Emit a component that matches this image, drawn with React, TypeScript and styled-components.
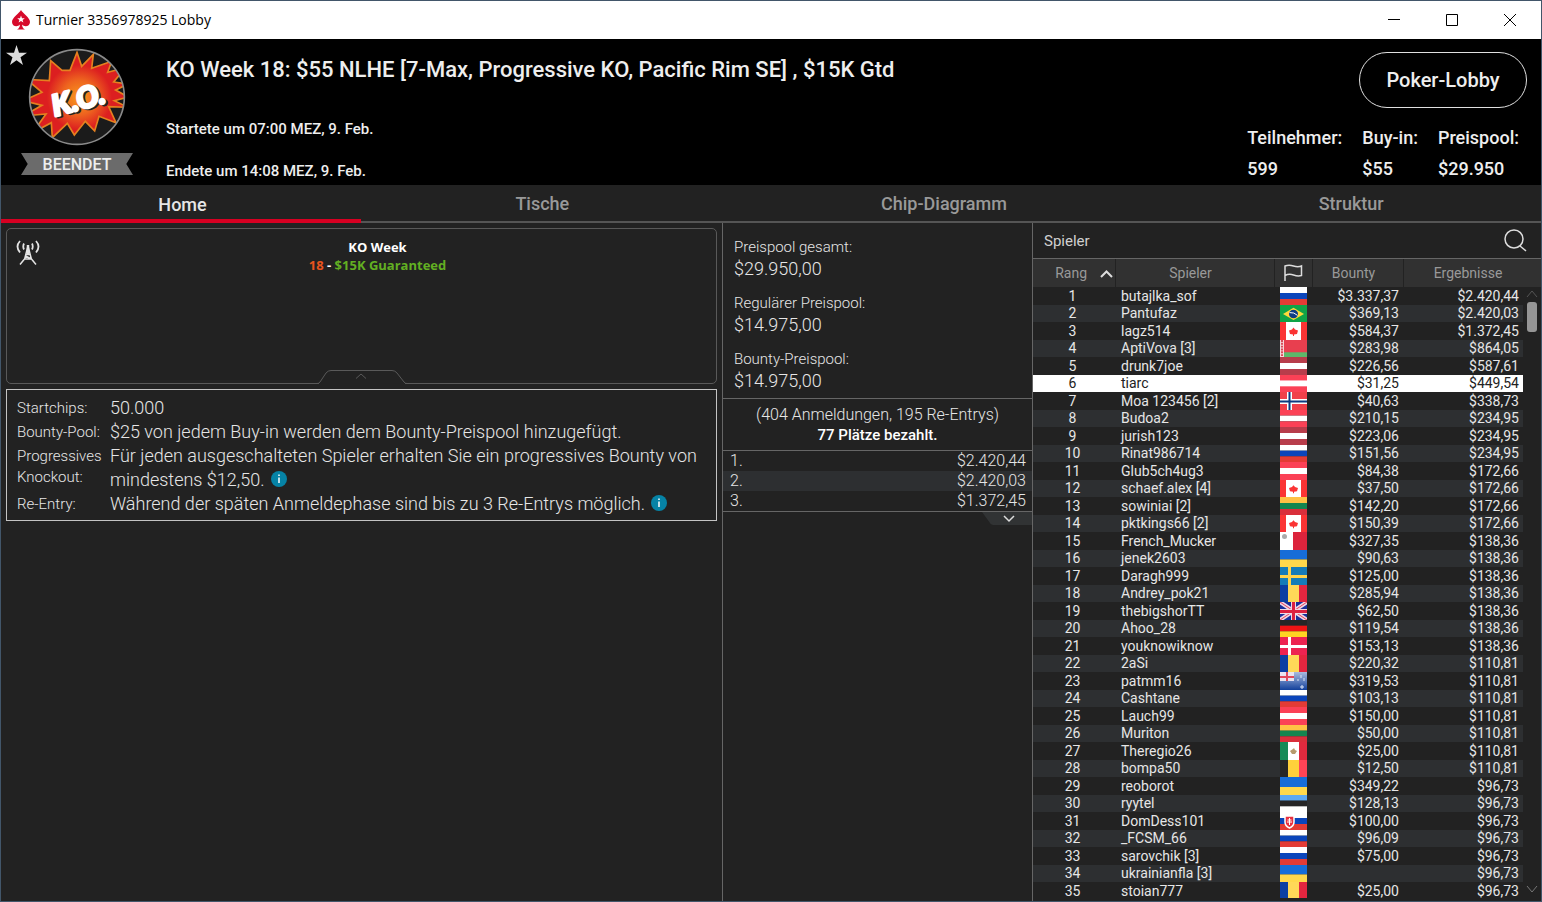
import React from "react";
import styled, { createGlobalStyle, css } from "styled-components";

const GlobalStyle = createGlobalStyle`
  *, *::before, *::after { box-sizing: border-box; }
  body { margin: 0; background: #222; }
  button { font: inherit; color: inherit; background: none; border: 0; padding: 0; cursor: pointer; }
  svg { display: block; }
`;

/* ---------- window frame ---------- */

const Window = styled.div`
  display: flex;
  flex-direction: column;
  height: 100vh;
  border: 1px solid #42566a;
  background: #222;
  color: #e6e6e6;
  font-family: Roboto, "Liberation Sans", sans-serif;
  overflow: hidden;
`;

const TitleBar = styled.div`
  display: flex;
  align-items: center;
  flex: none;
  height: 38px;
  padding: 0 2px 0 10px;
  background: #fff;
  color: #000;
`;

const WindowTitle = styled.span`
  flex: 1;
  padding-left: 5px;
  font: 14px/20px "Open Sans", "Noto Sans", sans-serif;
`;

const WindowButton = styled.button`
  display: grid;
  place-items: center;
  width: 58px;
  height: 38px;
`;

/* ---------- header ---------- */

const Header = styled.header`
  display: flex;
  flex: none;
  height: 146px;
  background: #000;
  color: #eee;
  font-weight: 500;
`;

const Emblem = styled.div`
  position: relative;
  display: flex;
  flex-direction: column;
  align-items: center;
  gap: 7px;
  width: 152px;
  flex: none;
  padding-top: 9px;
`;

const Favourite = styled.button`
  position: absolute;
  left: 4px;
  top: 5px;
`;

const Ribbon = styled.span`
  width: 112px;
  height: 22px;
  background: #6b6b6b;
  color: #eee;
  clip-path: polygon(0 0, 100% 0, 94% 50%, 100% 100%, 0 100%, 6% 50%);
  text-align: center;
  font-size: 16px;
  line-height: 24px;
`;

const Summary = styled.div`
  flex: 1;
  padding: 18px 0 0 13px;
`;

const Heading = styled.h1`
  margin: 0 0 36px;
  font-size: 22px;
  line-height: 26px;
  font-weight: 500;
`;

const TimeLine = styled.p`
  margin: 0 0 22px;
  font-size: 15px;
  line-height: 20px;
`;

const HeaderSide = styled.div`
  display: flex;
  flex-direction: column;
  align-items: flex-end;
  padding: 13px 14px 0 0;
`;

const LobbyButton = styled.button`
  width: 168px;
  height: 56px;
  border: 1px solid #e0e0e0;
  border-radius: 28px;
  font-size: 20px;
  font-weight: 500;
`;

const Stats = styled.dl`
  display: flex;
  gap: 20px;
  margin: 16px 8px 0 0;
  font-size: 18px;
  line-height: 28px;
`;

const StatValue = styled.dd`
  margin: 3px 0 0;
`;

/* ---------- tabs ---------- */

const Tabs = styled.nav`
  display: flex;
  flex: none;
  height: 38px;
  border-bottom: 2px solid #555;
`;

const Tab = styled.button<{ $active?: boolean }>`
  flex: 1 1 auto;
  height: 38px;
  padding: 0 3px 2px 0;
  font-size: 18px;
  font-weight: 500;
  color: #999;
  ${(p) =>
    p.$active &&
    css`
      color: #e6e6e6;
      border-bottom: 4px solid #d70022;
      padding: 4px 0 0 3px;
    `}
`;

/* ---------- content columns ---------- */

const Content = styled.main`
  display: grid;
  grid-template-columns: minmax(0, 1fr) 310px 509px;
  flex: 1;
  min-height: 0;
`;

const LeftColumn = styled.section`
  display: flex;
  flex-direction: column;
  gap: 5px;
  padding: 5px 5px 0 5px;
`;

const PromoBox = styled.div`
  position: relative;
  height: 156px;
  border: 1px solid #595959;
  border-radius: 5px;
  padding: 9px 0 0 32px;
  text-align: center;
  font: 700 13px/18px "Open Sans", "Noto Sans", sans-serif;
`;

const PromoLine = styled.p`
  margin: 0;
  color: #fff;
`;

const Orange = styled.span`
  color: #e8541e;
`;
const Green = styled.span`
  color: #62b022;
`;

const TowerIcon = styled.svg`
  position: absolute;
  left: 9px;
  top: 11px;
`;

const PromoToggle = styled.button`
  position: absolute;
  left: 50%;
  bottom: -1px;
  margin-left: -45px;
`;

const InfoBox = styled.dl`
  display: grid;
  grid-template-columns: 93px 1fr;
  margin: 0;
  padding: 6px 10px 4px;
  border: 1px solid #c4c4c4;
  font-weight: 300;
  font-size: 18px;
  line-height: 24px;
`;

const InfoTerm = styled.dt<{ $long?: boolean }>`
  font-size: 15px;
  line-height: ${(p) => (p.$long ? 21 : 24)}px;
  padding-top: ${(p) => (p.$long ? 2 : 0)}px;
`;

const InfoText = styled.dd`
  margin: 0;
`;

const InfoButton = styled.button`
  display: inline-block;
  vertical-align: top;
  margin: 3px 0 0 2px;
`;

/* ---------- prize column ---------- */

const PrizeColumn = styled.section`
  border-left: 1px solid #666;
  font-weight: 300;
`;

const Pools = styled.dl`
  display: grid;
  gap: 12px;
  margin: 0;
  padding: 13px 11px 6px;
  border-bottom: 1px solid #666;
  font-size: 15px;
  line-height: 22px;
`;

const PoolAmount = styled.dd`
  margin: 0;
  font-size: 18px;
`;

const Entries = styled.div`
  padding: 6px 0 5px;
  border-bottom: 1px solid #666;
  text-align: center;
  font-size: 16px;
  line-height: 20px;
  strong { display: block; font-size: 15px; font-weight: 500; color: #fff; }
`;

const Payouts = styled.table`
  width: 100%;
  border-collapse: collapse;
  border-bottom: 1px solid #666;
  font-size: 16px;
  line-height: 20px;
  td { padding: 0 6px 0 7px; }
  td:last-child { text-align: right; }
  tr:nth-child(even) { background: #2d2f31; }
`;

const PayoutToggle = styled.button`
  display: block;
  margin-left: auto;
`;

/* ---------- players column ---------- */

const PlayersColumn = styled.section`
  display: flex;
  flex-direction: column;
  min-height: 0;
  border-left: 1px solid #666;
  padding-bottom: 3px;
`;

const PlayersBar = styled.div`
  display: flex;
  align-items: center;
  justify-content: space-between;
  flex: none;
  height: 36px;
  padding: 0 14px 0 11px;
  border-bottom: 1px solid #666;
`;

const PlayersTitle = styled.h2`
  margin: 0;
  font-size: 15px;
  font-weight: 400;
  color: #d0d0d0;
`;

const PlayersScroll = styled.div`
  position: relative;
  flex: 1;
  min-height: 0;
  overflow: hidden;
`;

const PlayersTable = styled.table`
  width: 100%;
  table-layout: fixed;
  border-collapse: separate;
  border-spacing: 0;
  font-size: 14px;
  line-height: 17px;
`;

const HeadCell = styled.th`
  height: 28px;
  padding: 0 9px 0 0;
  border-left: 1px solid #222;
  background: #313131;
  color: #999;
  font-weight: 400;
  &:first-child { border-left: 0; padding-right: 2px; }
`;

const HeadFlex = styled.span`
  display: flex;
  align-items: center;
  justify-content: flex-end;
  gap: 13px;
`;

const PlayerRow = styled.tr<{ $selected?: boolean }>`
  td { height: 18px; padding: 0; }
  svg { height: 18px; }
  &:nth-child(even) td,
  &:nth-child(even) svg { height: 17px; }
  &:nth-child(even) td:not(:last-child) { background: #2d2f31; }
  ${(p) =>
    p.$selected &&
    css`
      && td:not(:last-child) { background: #fff; color: #222; }
    `}
`;

const RankCell = styled.td`
  text-align: center;
  && { padding-right: 3px; }
`;
const NameCell = styled.td`
  && { padding-left: 6px; }
`;
const FlagCell = styled.td`
  && { padding-left: 6px; }
`;
const MoneyCell = styled.td`
  text-align: right;
  && { padding-right: 4px; }
`;

const ScrollTrack = styled.div`
  position: absolute;
  right: 2px;
  top: 31px;
  bottom: 5px;
  width: 14px;
  display: flex;
  flex-direction: column;
  align-items: center;
  gap: 4px;
`;

const ScrollThumb = styled.div`
  width: 10px;
  height: 30px;
  border-radius: 3px;
  background: #969696;
  margin-bottom: auto;
`;

/* ---------- flags ---------- */

const rows3 = (a: string, b: string, c: string) => (
  <>
    <rect width="27" height="6" fill={a} />
    <rect y="6" width="27" height="6" fill={b} />
    <rect y="12" width="27" height="6" fill={c} />
  </>
);
const cols3 = (a: string, b: string, c: string) => (
  <>
    <rect width="8" height="18" fill={a} />
    <rect x="8" width="11" height="18" fill={b} />
    <rect x="19" width="8" height="18" fill={c} />
  </>
);
const cross = (bg: string, fg: string, inner?: string) => (
  <>
    <rect width="27" height="18" fill={bg} />
    <path d="M9.500 0V18M0 9.500H27" stroke={fg} strokeWidth={inner ? 5 : 3} />
    {inner && <path d="M9.500 0V18M0 9.500H27" stroke={inner} strokeWidth="2" />}
  </>
);

const flags: Record<string, React.ReactNode> = {
  ru: rows3("#fff", "#0b45bb", "#e33b35"),
  at: rows3("#fb4156", "#fff", "#fb4156"),
  lv: rows3("#b83d4b", "#fff", "#b83d4b"),
  lt: rows3("#ffc145", "#14854f", "#d92f3b"),
  de: rows3("#262626", "#f01414", "#ffd422"),
  ee: rows3("#5da9f2", "#262626", "#fff"),
  ro: cols3("#0b3fa3", "#ffd858", "#e3263f"),
  be: cols3("#262626", "#ffd03b", "#ff4456"),
  ua: (
    <>
      <rect width="27" height="10" fill="#166dd8" />
      <rect y="10" width="27" height="8" fill="#ffd84b" />
    </>
  ),
  se: cross("#157cb8", "#ffd34a"),
  dk: cross("#ed2350", "#fff"),
  no: cross("#f0404a", "#fff", "#0d3a80"),
  br: (
    <>
      <rect width="27" height="18" fill="#0fa447" />
      <path d="M3 9.500L13.500 3L24 9.500L13.500 16Z" fill="#fdda3a" />
      <circle cx="13.500" cy="9.500" r="4.500" fill="#0f3b84" />
      <path d="M9.500 8Q14 7.500 17.500 11" stroke="#fff" fill="none" />
    </>
  ),
  ca: (
    <>
      <rect width="27" height="18" fill="#fff" />
      <path d="M0 0H6V18H0ZM21 0H27V18H21Z" fill="#fb3434" />
      <path d="M13.500 5.500L15 7.500L18 8.500L17 12L14 12.500V14H13V12.500L10 12L9 8.500L12 7.500Z" fill="#fb3434" />
    </>
  ),
  by: (
    <>
      <rect width="27" height="18" fill="#e83f4f" />
      <rect y="13" width="27" height="5" fill="#5db86a" />
      <rect width="4" height="18" fill="#f6d5d8" />
      <path d="M2 0V18" stroke="#d84a58" strokeWidth="2" strokeDasharray="2 1" />
    </>
  ),
  mt: (
    <>
      <rect width="13" height="18" fill="#fff" />
      <rect x="13" width="14" height="18" fill="#dc243c" />
      <circle cx="4.500" cy="4.500" r="2.500" fill="#aaa" />
    </>
  ),
  gb: (
    <>
      <rect width="27" height="18" fill="#1a2f9b" />
      <path d="M0 0L27 18M27 0L0 18" stroke="#f0d8e4" strokeWidth="4" />
      <path d="M0 0L27 18M27 0L0 18" stroke="#e8405a" strokeWidth="1" />
      <path d="M13.500 0V18M0 9.500H27" stroke="#f0d8e4" strokeWidth="5" />
      <path d="M13.500 0V18M0 9.500H27" stroke="#dc2040" strokeWidth="3" />
    </>
  ),
  nz: (
    <>
      <defs>
        <linearGradient id="nzSea" x1="0" y1="0" x2="0" y2="1">
          <stop offset="0" stopColor="#a9bbdf" />
          <stop offset="1" stopColor="#12409b" />
        </linearGradient>
      </defs>
      <rect width="27" height="18" fill="url(#nzSea)" />
      <rect width="14" height="9" fill="#e8e4f0" />
      <path d="M7 0V9M0 5H14" stroke="#e04a5c" strokeWidth="2" />
      <path d="M22 13V17M20 15H24M21 3V6M24 6V9M18 7V9" stroke="#dfe6f5" />
    </>
  ),
  mx: (
    <>
      {cols3("#158a58", "#fff", "#e02a3e")}
      <path d="M10 9L13 7L14 6L15 8L17 9L15 12L12 12Z" fill="#b79a6c" />
    </>
  ),
  sk: (
    <>
      {rows3("#fff", "#0b45bb", "#e33b35")}
      <path d="M5 4H14V10Q14 14 9.500 16Q5 14 5 10Z" fill="#e8303f" stroke="#fff" strokeWidth="1.500" />
      <path d="M9.500 6V13M7.500 8H11.500M7 10H12" stroke="#fff" />
    </>
  ),
};

const Flag = ({ code }: { code: string }) => (
  <svg width="27" viewBox="0 0 27 18" preserveAspectRatio="none" role="img" aria-label={code}>
    {flags[code]}
  </svg>
);

/* ---------- data ---------- */

const players: [string, string, string, string][] = [
  ["butajlka_sof", "ru", "$3.337,37", "$2.420,44"],
  ["Pantufaz", "br", "$369,13", "$2.420,03"],
  ["lagz514", "ca", "$584,37", "$1.372,45"],
  ["AptiVova [3]", "by", "$283,98", "$864,05"],
  ["drunk7joe", "lv", "$226,56", "$587,61"],
  ["tiarc", "at", "$31,25", "$449,54"],
  ["Moa 123456 [2]", "no", "$40,63", "$338,73"],
  ["Budoa2", "at", "$210,15", "$234,95"],
  ["jurish123", "lv", "$223,06", "$234,95"],
  ["Rinat986714", "ru", "$151,56", "$234,95"],
  ["Glub5ch4ug3", "at", "$84,38", "$172,66"],
  ["schaef.alex [4]", "ca", "$37,50", "$172,66"],
  ["sowiniai [2]", "lt", "$142,20", "$172,66"],
  ["pktkings66 [2]", "ca", "$150,39", "$172,66"],
  ["French_Mucker", "mt", "$327,35", "$138,36"],
  ["jenek2603", "ua", "$90,63", "$138,36"],
  ["Daragh999", "se", "$125,00", "$138,36"],
  ["Andrey_pok21", "ro", "$285,94", "$138,36"],
  ["thebigshorTT", "gb", "$62,50", "$138,36"],
  ["Ahoo_28", "de", "$119,54", "$138,36"],
  ["youknowiknow", "dk", "$153,13", "$138,36"],
  ["2aSi", "ro", "$220,32", "$110,81"],
  ["patmm16", "nz", "$319,53", "$110,81"],
  ["Cashtane", "ru", "$103,13", "$110,81"],
  ["Lauch99", "at", "$150,00", "$110,81"],
  ["Muriton", "lt", "$50,00", "$110,81"],
  ["Theregio26", "mx", "$25,00", "$110,81"],
  ["bompa50", "be", "$12,50", "$110,81"],
  ["reoborot", "ua", "$349,22", "$96,73"],
  ["ryytel", "ee", "$128,13", "$96,73"],
  ["DomDess101", "sk", "$100,00", "$96,73"],
  ["_FCSM_66", "ru", "$96,09", "$96,73"],
  ["sarovchik [3]", "ru", "$75,00", "$96,73"],
  ["ukrainianfla [3]", "ua", "", "$96,73"],
  ["stoian777", "ro", "$25,00", "$96,73"],
];

/* ---------- drawings ---------- */

const SpadeLogo = () => (
  <svg width="20" height="22" viewBox="0 0 20 22" aria-hidden="true">
    <path d="M10 1C11.500 4 19 8.500 19 13C19 17.500 13.500 18.500 11 15.500C11.200 18 12 19.500 14 20.500H6C8 19.500 8.800 18 9 15.500C6.500 18.500 1 17.500 1 13C1 8.500 8.500 4 10 1Z" fill="#d70a2b" />
    <path d="M10 6.500L11 9.200H13.800L11.600 10.900L12.400 13.600L10 12L7.600 13.600L8.400 10.900L6.200 9.200H9Z" fill="#fff" />
  </svg>
);

const KoEmblem = () => (
  <svg width="98" height="98" viewBox="84 144 294 294" aria-hidden="true">
    <defs>
      <radialGradient id="burst" gradientUnits="userSpaceOnUse" cx="238" cy="292" r="130">
        <stop offset="0" stopColor="#f99a1c" />
        <stop offset="0.4" stopColor="#ee641f" />
        <stop offset="0.75" stopColor="#dc1f20" />
      </radialGradient>
      <clipPath id="disc"><circle cx="231" cy="291" r="142" /></clipPath>
    </defs>
    <circle cx="231" cy="291" r="142" fill="#1b1b1b" />
    <g clipPath="url(#disc)">
      <path
        d="M152 182L186 211L210 211L231 157L245 199L280 163L275 205L335 184L323 217L376 203L341 246L384 252L347 270L384 291L343 302L384 322L326 320L348 368L297 349L284 393L256 364L223 405L202 370L157 413L154 368L98 398L138 342L70 348L126 316L70 302L126 277L80 238L148 242Z"
        fill="url(#burst)"
        stroke="#e5801f"
        strokeWidth="5"
      />
    </g>
    <circle cx="231" cy="291" r="142" fill="none" stroke="#8a8a8a" strokeWidth="5" />
    <g
      transform="rotate(-15 240 300)"
      fontFamily="Lato, 'Open Sans', sans-serif"
      fontWeight="900"
      fontStyle="italic"
      fontSize="88"
      strokeWidth="8"
      strokeLinejoin="round"
    >
      <text x="240" y="333" textAnchor="middle" fill="#222" stroke="#222">K.O.</text>
      <text x="235" y="328" textAnchor="middle" fill="#fff" stroke="#fff">K.O.</text>
    </g>
  </svg>
);

const Star = () => (
  <svg width="23" height="23" viewBox="0 0 23 23" aria-hidden="true">
    <path d="M11.500 1L14 8.700H22L15.500 13.300L18 21L11.500 16.300L5 21L7.500 13.300L1 8.700H9Z" fill="#dcdcdc" />
  </svg>
);

const Tower = () => (
  <TowerIcon width="24" height="26" viewBox="0 0 24 26" fill="none" stroke="#e4e4e4" strokeWidth="1.500" aria-hidden="true">
    <path d="M12 6L8.500 19.500M12 6L15.500 19.500M4 24.500L8.500 19H15.500L20 24.500M10 14.500H14M9.500 16L15.500 19" />
    <path d="M12 5V14" strokeWidth="2.500" />
    <path d="M8 3.500Q6.500 6.500 8 9.500M16 3.500Q17.500 6.500 16 9.500M4 1Q-1 6.500 4 12.500M20 1Q25 6.500 20 12.500" strokeWidth="1.800" />
  </TowerIcon>
);

const InfoIcon = () => (
  <svg width="16" height="16" viewBox="0 0 16 16" aria-hidden="true">
    <circle cx="8" cy="8" r="8" fill="#0683a6" />
    <path d="M8 6.500V12M8 3.500V5" stroke="#fff" strokeWidth="1.500" />
  </svg>
);

/* ---------- page ---------- */

export default function App() {
  return (
    <Window>
      <GlobalStyle />
      <TitleBar>
        <SpadeLogo />
        <WindowTitle>Turnier 3356978925 Lobby</WindowTitle>
        <WindowButton aria-label="Minimieren">
          <svg width="12" height="12"><path d="M0 5.500H12" stroke="#000" /></svg>
        </WindowButton>
        <WindowButton aria-label="Maximieren">
          <svg width="12" height="12"><path d="M.5 .5H11.500V11.500H.5Z" stroke="#000" fill="none" /></svg>
        </WindowButton>
        <WindowButton aria-label="Schließen">
          <svg width="12" height="12"><path d="M0 0L12 12M12 0L0 12" stroke="#000" /></svg>
        </WindowButton>
      </TitleBar>

      <Header>
        <Emblem>
          <Favourite aria-label="Favorit"><Star /></Favourite>
          <KoEmblem />
          <Ribbon>BEENDET</Ribbon>
        </Emblem>
        <Summary>
          <Heading>KO Week 18: $55 NLHE [7-Max, Progressive KO, Pacific Rim SE] , $15K Gtd</Heading>
          <TimeLine>Startete um 07:00 MEZ, 9. Feb.</TimeLine>
          <TimeLine>Endete um 14:08 MEZ, 9. Feb.</TimeLine>
        </Summary>
        <HeaderSide>
          <LobbyButton>Poker-Lobby</LobbyButton>
          <Stats>
            <div><dt>Teilnehmer:</dt><StatValue>599</StatValue></div>
            <div><dt>Buy-in:</dt><StatValue>$55</StatValue></div>
            <div><dt>Preispool:</dt><StatValue>$29.950</StatValue></div>
          </Stats>
        </HeaderSide>
      </Header>

      <Tabs>
        <Tab $active>Home</Tab>
        <Tab>Tische</Tab>
        <Tab>Chip-Diagramm</Tab>
        <Tab>Struktur</Tab>
      </Tabs>

      <Content>
        <LeftColumn>
          <PromoBox>
            <Tower />
            <PromoLine>KO Week</PromoLine>
            <PromoLine>
              <Orange>18</Orange> - <Green>$15K Guaranteed</Green>
            </PromoLine>
            <PromoToggle aria-label="Einklappen">
              <svg width="90" height="15" fill="none" stroke="#595959">
                <rect y="1" x="2" width="86" height="14" fill="#222" stroke="none" />
                <path d="M0 14.500Q2 14.500 3 13L9 4Q11 1.500 14 1.500H75Q78 1.500 80 4L87 13Q88 14.500 90 14.500M39 9.500L44 5L49 9.500" />
              </svg>
            </PromoToggle>
          </PromoBox>
          <InfoBox>
            <InfoTerm>Startchips:</InfoTerm>
            <InfoText>50.000</InfoText>
            <InfoTerm>Bounty-Pool:</InfoTerm>
            <InfoText>$25 von jedem Buy-in werden dem Bounty-Preispool hinzugefügt.</InfoText>
            <InfoTerm $long>Progressives Knockout:</InfoTerm>
            <InfoText>
              Für jeden ausgeschalteten Spieler erhalten Sie ein progressives Bounty von mindestens $12,50.{" "}
              <InfoButton aria-label="Info"><InfoIcon /></InfoButton>
            </InfoText>
            <InfoTerm>Re-Entry:</InfoTerm>
            <InfoText>
              Während der späten Anmeldephase sind bis zu 3 Re-Entrys möglich.{" "}
              <InfoButton aria-label="Info"><InfoIcon /></InfoButton>
            </InfoText>
          </InfoBox>
        </LeftColumn>

        <PrizeColumn>
          <Pools>
            <div><dt>Preispool gesamt:</dt><PoolAmount>$29.950,00</PoolAmount></div>
            <div><dt>Regulärer Preispool:</dt><PoolAmount>$14.975,00</PoolAmount></div>
            <div><dt>Bounty-Preispool:</dt><PoolAmount>$14.975,00</PoolAmount></div>
          </Pools>
          <Entries>
            (404 Anmeldungen, 195 Re-Entrys)
            <strong>77 Plätze bezahlt.</strong>
          </Entries>
          <Payouts>
            <tbody>
              <tr><td>1.</td><td>$2.420,44</td></tr>
              <tr><td>2.</td><td>$2.420,03</td></tr>
              <tr><td>3.</td><td>$1.372,45</td></tr>
            </tbody>
          </Payouts>
          <PayoutToggle aria-label="Ausklappen">
            <svg width="50" height="13">
              <path d="M0 0H50V13H13Q9 13 8 11Z" fill="#313334" />
              <path d="M22 4L27 9L32 4" stroke="#ddd" strokeWidth="1.500" fill="none" />
            </svg>
          </PayoutToggle>
        </PrizeColumn>

        <PlayersColumn>
          <PlayersBar>
            <PlayersTitle>Spieler</PlayersTitle>
            <button aria-label="Suchen">
              <svg width="24" height="24" fill="none" stroke="#ddd" strokeWidth="1.500">
                <circle cx="11" cy="10" r="9" />
                <path d="M17 17L23 22" />
              </svg>
            </button>
          </PlayersBar>
          <PlayersScroll>
            <PlayersTable>
              <colgroup>
                <col width="82" />
                <col />
                <col width="38" />
                <col width="91" />
                <col width="120" />
                <col width="18" />
              </colgroup>
              <thead>
                <tr>
                  <HeadCell scope="col">
                    <HeadFlex>
                      Rang
                      <svg width="13" height="9" fill="none" stroke="#ddd" strokeWidth="2"><path d="M1 8L6.500 2.500L12 8" /></svg>
                    </HeadFlex>
                  </HeadCell>
                  <HeadCell scope="col">Spieler</HeadCell>
                  <HeadCell scope="col" aria-label="Land">
                    <HeadFlex>
                      <svg width="19" height="18" fill="none" stroke="#ddd" strokeWidth="1.500">
                        <path d="M1 17V2Q5 .5 9.500 2T17.500 2V11.500Q14 12.500 9.500 11T1 11.500" />
                      </svg>
                    </HeadFlex>
                  </HeadCell>
                  <HeadCell scope="col">Bounty</HeadCell>
                  <HeadCell scope="col" colSpan={2}>Ergebnisse</HeadCell>
                </tr>
              </thead>
              <tbody>
                {players.map(([name, flag, bounty, result], i) => (
                  <PlayerRow key={name} $selected={i === 5}>
                    <RankCell>{i + 1}</RankCell>
                    <NameCell>{name}</NameCell>
                    <FlagCell><Flag code={flag} /></FlagCell>
                    <MoneyCell>{bounty}</MoneyCell>
                    <MoneyCell>{result}</MoneyCell>
                    <td />
                  </PlayerRow>
                ))}
              </tbody>
            </PlayersTable>
            <ScrollTrack>
              <svg width="12" height="8" fill="none" stroke="#555"><path d="M1 7L6 1L11 7" /></svg>
              <ScrollThumb />
              <svg width="12" height="8" fill="none" stroke="#777"><path d="M1 1L6 7L11 1" /></svg>
            </ScrollTrack>
          </PlayersScroll>
        </PlayersColumn>
      </Content>
    </Window>
  );
}
